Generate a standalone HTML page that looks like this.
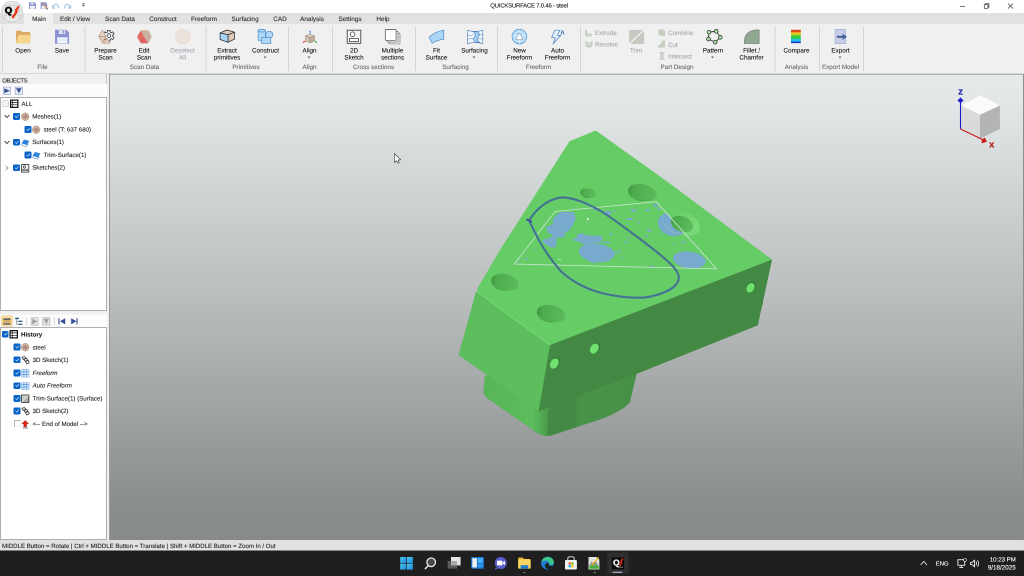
<!DOCTYPE html>
<html><head><meta charset="utf-8"><title>QUICKSURFACE 7.0.46 - steel</title>
<style>
*{margin:0;padding:0;box-sizing:border-box}
html,body{text-rendering:geometricPrecision;-webkit-text-stroke:0.1px currentColor;width:1024px;height:576px;overflow:hidden;background:#f0f0f0;font-family:"Liberation Sans",sans-serif;font-size:6.3px;color:#222}
.abs{position:absolute}
#title{position:absolute;left:0;top:0;width:1024px;height:13px;background:#fff}
#tabbar{position:absolute;left:0;top:13px;width:1024px;height:11px;background:#e1e1e1}
#tabmain{position:absolute;left:24px;top:13px;width:29px;height:11px;background:#f0f0f0}
.tab{position:absolute;top:15.21px;width:60px;margin-left:-30px;text-align:center;font-size:6.4px;line-height:8px;color:#2a2a2a;white-space:nowrap}
#ribbon{position:absolute;left:0;top:24px;width:1024px;height:50px;background:#f0f0f0;border-bottom:1px solid #d6d6d6}
.sep{position:absolute;top:26px;width:1px;height:45px;background:#d4d4d4}
.bl{position:absolute;top:47.10px;width:60px;margin-left:-30px;text-align:center;font-size:6.3px;line-height:7px;color:#151515;white-space:nowrap}
.bl.dis{color:#a6a8b2}
.gl{position:absolute;top:62.90px;width:80px;margin-left:-40px;text-align:center;font-size:6.3px;line-height:8px;color:#6a6a6a;white-space:nowrap}
.sm{position:absolute;font-size:6.3px;line-height:8px;color:#a6a8b2;white-space:nowrap}
.arr{position:absolute;width:0;height:0;border-left:1.9px solid transparent;border-right:1.9px solid transparent;border-top:2.1px solid #6a6a6a;margin-left:-1.9px}
.ic{position:absolute;overflow:visible}
#left1h{position:absolute;left:0;top:74px;width:107px;height:10px;background:#f0f0f0;border-right:1px solid #c8c8c8}
#left1t{position:absolute;left:0;top:84px;width:107px;height:13px;background:#fcfcfc}
#tree1{position:absolute;left:0;top:97px;width:107px;height:214px;background:#fff;border:1px solid #aeaeae}
#left2t{position:absolute;left:0;top:314.7px;width:107px;height:13px;background:#fcfcfc}
#tree2{position:absolute;left:0;top:327px;width:107px;height:213px;background:#fff;border:1px solid #aeaeae}
.ti{position:absolute;margin-top:1px;font-size:6.15px;line-height:8px;color:#222;white-space:nowrap}
.cb{position:absolute;width:6.8px;height:6.8px;margin:-.1px 0 0 -.1px;border-radius:1.2px;background:#0a64c8}
.cb:after{content:"";position:absolute;left:1.9px;top:1.9px;width:2.8px;height:1.3px;border-left:0.55px solid #fff;border-bottom:0.55px solid #fff;transform:rotate(-48deg)}
.cbe{position:absolute;width:6.6px;height:6.6px;border-radius:1.2px;background:#f4f4f4;border:0.8px solid #b8b8b8}
#vp{position:absolute;left:109px;top:74px;width:915px;height:466px;background:linear-gradient(#e7eaeb 0%,#e4e7e8 6%,#b8bbbb 50%,#8a8e8e 92%,#868a8a 100%);border-left:1px solid #9a9c9c;border-top:1px solid #b4b6b6;border-right:1px solid #8c8e8e}
#status{position:absolute;left:0;top:540px;width:1024px;height:11px;background:#e1e1e1}
#status span{position:absolute;left:2px;top:2.2px;font-size:6.1px;line-height:8px;color:#222;white-space:nowrap}
#taskbar{position:absolute;left:0;top:550.5px;width:1024px;height:25.5px;background:#1f1f1f}
.tb{position:absolute;color:#fff;font-size:6.6px;line-height:8px;white-space:nowrap}
</style></head><body><div id="root" style="position:absolute;left:0;top:0;width:2048px;height:1152px;will-change:transform;transform:scale(.5);transform-origin:0 0"><div style="position:absolute;left:0;top:0;width:1024px;height:576px;zoom:2">
<div id="title"></div>
<div id="tabbar"></div><div id="tabmain"></div>
<div id="ribbon"></div>
<div class="abs" style="left:480px;top:1.6px;width:98px;text-align:center;font-size:6px;letter-spacing:-0.23px;line-height:8px;color:#222;white-space:nowrap">QUICKSURFACE 7.0.46 - steel</div>
<svg class="ic" style="left:955.300px;top:.5px" width="69" height="13" viewBox="0 0 69 13"><path d="M4.5 5.8h5" stroke="#333" stroke-width=".7" fill="none"/><path d="M28.8 4.2h3.6v3.6h-3.6z M29.8 4.2v-1h3.6v3.6h-1" stroke="#333" stroke-width=".7" fill="none"/><path d="M52.5 3l5 5M57.500 3l-5 5" stroke="#333" stroke-width=".7" fill="none"/></svg>

<svg class="ic" style="left:0;top:0" width="100" height="26" viewBox="0 0 100 26">
<defs><clipPath id="lc"><circle cx="12" cy="11.600" r="10"/></clipPath></defs>
<circle cx="12" cy="11.600" r="10.400" fill="#ebebeb" stroke="#c4c4c4" stroke-width=".7"/>
<g clip-path="url(#lc)" stroke="#bcbcbc" stroke-width=".45" fill="none"><path d="M4 5.500h17M3 10.500h18M4 15.500h17M9.500 3v16M14.500 3v16M5 4v14M19 4v14"/></g>
<path d="M18.300 7.200L16 10.200L16.600 11.800L12.800 17.200" fill="none" stroke="#e63a1c" stroke-width="2.300" stroke-linecap="round" stroke-linejoin="round"/>
<text x="8.500" y="13.300" text-anchor="middle" font-family="Liberation Sans, sans-serif" font-weight="bold" font-size="9.400" fill="#0a0a0a" stroke="#0a0a0a" stroke-width=".7" stroke-linejoin="round">Q</text>
<!-- qat -->
<path d="M29 2.800q0-.5.500-.5h5l1.500 1.500v4.700q0 .5-.5.500h-6q-.5 0-.5-.5z" fill="#8e92d2"/><rect x="30" y="5.800" width="5" height="3" fill="#eef4fa"/><rect x="30.800" y="2.600" width="3" height="1.800" fill="#dfe4f0"/>
<path d="M40.600 2.800q0-.5.500-.5h4.600l1.500 1.500v4.700q0 .5-.5.500h-5.600q-.5 0-.5-.5z" fill="#8e92d2"/><rect x="41.600" y="5.800" width="4" height="3" fill="#eef4fa"/><path d="M42.600 3.200L47.300 8.900" stroke="#c89868" stroke-width="1.300"/><path d="M46.800 8.300l.9 1.300" stroke="#555" stroke-width=".8"/>
<path d="M53.200 7.400Q54.200 4.200 56.200 4.200Q58.600 4.600 58.600 8.400" fill="none" stroke="#a4c8e8" stroke-width="1.200"/><path d="M52 4.800v3.800h3.600z" fill="#a4c8e8"/>
<path d="M70 7.400Q69 4.200 67 4.200Q64.600 4.600 64.600 8.400" fill="none" stroke="#a4c8e8" stroke-width="1.200"/><path d="M71.200 4.800v3.800h-3.600z" fill="#a4c8e8"/>
<path d="M82 3.600h2.800" stroke="#555" stroke-width=".6"/><path d="M81.900 4.700h3l-1.500 2z" fill="#444"/>
</svg>
<div class="tab" style="left:39px">Main</div>
<div class="tab" style="left:75px">Edit / View</div>
<div class="tab" style="left:120px">Scan Data</div>
<div class="tab" style="left:163px">Construct</div>
<div class="tab" style="left:204px">Freeform</div>
<div class="tab" style="left:245px">Surfacing</div>
<div class="tab" style="left:280px">CAD</div>
<div class="tab" style="left:312px">Analysis</div>
<div class="tab" style="left:350px">Settings</div>
<div class="tab" style="left:383px">Help</div>

<div class="sep" style="left:2px"></div>
<div class="sep" style="left:84.5px"></div>
<div class="sep" style="left:205.5px"></div>
<div class="sep" style="left:288px"></div>
<div class="sep" style="left:332px"></div>
<div class="sep" style="left:415px"></div>
<div class="sep" style="left:497px"></div>
<div class="sep" style="left:580px"></div>
<div class="sep" style="left:774.5px"></div>
<div class="sep" style="left:819px"></div>
<div class="sep" style="left:863px"></div>
<div class="bl" style="left:23px">Open</div>
<div class="bl" style="left:62px">Save</div>
<div class="bl" style="left:105.5px">Prepare<br>Scan</div>
<div class="bl" style="left:144px">Edit<br>Scan</div>
<div class="bl dis" style="left:182.5px">Deselect<br>All</div>
<div class="bl" style="left:227px">Extract<br>primitives</div>
<div class="bl" style="left:265.5px">Construct</div>
<div class="arr" style="left:265.5px;top:56.4px"></div>
<div class="bl" style="left:309.5px">Align</div>
<div class="arr" style="left:309.5px;top:56.4px"></div>
<div class="bl" style="left:354px">2D<br>Sketch</div>
<div class="bl" style="left:392.5px">Multiple<br>sections</div>
<div class="bl" style="left:436.5px">Fit<br>Surface</div>
<div class="bl" style="left:474.5px">Surfacing</div>
<div class="arr" style="left:474.5px;top:56.4px"></div>
<div class="bl" style="left:519.5px">New<br>Freeform</div>
<div class="bl" style="left:557.5px">Auto<br>Freeform</div>
<div class="bl dis" style="left:636px">Trim</div>
<div class="bl" style="left:713px">Pattern</div>
<div class="arr" style="left:713px;top:56.4px"></div>
<div class="bl" style="left:751.5px">Fillet /<br>Chamfer</div>
<div class="bl" style="left:796.5px">Compare</div>
<div class="bl" style="left:840.5px">Export</div>
<div class="arr" style="left:840.5px;top:56.4px"></div>
<div class="gl" style="left:42.5px">File</div>
<div class="gl" style="left:144.5px">Scan Data</div>
<div class="gl" style="left:246px">Primitives</div>
<div class="gl" style="left:309.5px">Align</div>
<div class="gl" style="left:373.5px">Cross sections</div>
<div class="gl" style="left:455.5px">Surfacing</div>
<div class="gl" style="left:538.5px">Freeform</div>
<div class="gl" style="left:677px">Part Design</div>
<div class="gl" style="left:796.5px">Analysis</div>
<div class="gl" style="left:840.5px">Export Model</div>
<div class="sm" style="left:595px;top:29.00px">Extrude</div>
<div class="sm" style="left:595px;top:40.70px">Revolve</div>
<div class="sm" style="left:668px;top:29.00px">Combine</div>
<div class="sm" style="left:668px;top:40.80px">Cut</div>
<div class="sm" style="left:668px;top:52.30px">Intersect</div>
<svg class="ic" style="left:0;top:0" width="1024" height="576" viewBox="0 0 1024 576">
<!-- open -->
<path d="M16 31.400q0-.7.700-.7h4.300l1.200 1.300h7.300q.7 0 .7.700v9.900q0 .7-.7.700h-12.800q-.7 0-.7-.7z" fill="#dcaa62"/>
<path d="M18.200 35.600q.1-.7.800-.7h11.300q.8 0 .7.700l-1 7q-.1.700-.8.700h-12.500q-.7 0-.6-.7z" fill="#f4d68e"/>
<!-- save -->
<path d="M55 30.500q0-.7.700-.7h10.600l2.700 2.700v10.600q0 .7-.7.700h-12.600q-.7 0-.7-.7z" fill="#8e92d2"/>
<rect x="57.200" y="37.300" width="10.300" height="6" fill="#eef6fc"/><rect x="57.200" y="39.300" width="10.300" height="1.600" fill="#dcecf8"/>
<rect x="59" y="30.200" width="6.200" height="3.800" fill="#e4e8ec"/><rect x="62.600" y="30.700" width="1.500" height="2.800" fill="#8e92d2"/>
<!-- prepare scan -->
<path d="M107.43 30.37L110.17 30.37L110.08 32.02L111.35 32.75L112.73 31.85L114.10 34.22L112.63 34.97L112.63 36.43L114.10 37.18L112.73 39.55L111.35 38.65L110.08 39.38L110.17 41.03L107.43 41.03L107.52 39.38L106.25 38.65L104.87 39.55L103.50 37.18L104.97 36.43L104.97 34.97L103.50 34.22L104.87 31.85L106.25 32.75L107.52 32.02Z" fill="#f2f4f4" stroke="#3a3a3a" stroke-width=".8" stroke-linejoin="round"/><circle cx="108.900" cy="35.700" r="1.900" fill="#f0f0f0" stroke="#3a3a3a" stroke-width=".75"/>
<path d="M102.400 30.200L105.900 36.400L99.200 36.400Z" fill="#ead8ca" stroke="#b08870" stroke-width=".6" stroke-linejoin="round"/>
<path d="M99.200 36.400L105.900 36.400L102.400 43.200Z" fill="#e2cebe" stroke="#b08870" stroke-width=".6" stroke-linejoin="round"/>
<path d="M98.600 36.400L102.400 30.200M98.600 36.400L102.400 43.200" stroke="#c8a890" stroke-width=".5" fill="none"/>
<path d="M103.600 43.200L106.600 38.200L109.800 43.200Z" fill="#ead8ca" stroke="#b08870" stroke-width=".6" stroke-linejoin="round"/>
<!-- edit scan -->
<path d="M137.200 36.700L140.800 30.300L148.300 30.300L151.900 36.700L148.300 43.200L140.800 43.200Z" fill="#c8b09e"/>
<path d="M137.200 36.700L140.600 30.700L147.800 43.200L140.800 43.200Z" fill="#e06262"/>
<path d="M138.500 36.600h5.500" stroke="#e8c030" stroke-width=".6" stroke-dasharray="1.200 1"/>
<path d="M144.300 36.700L148.300 30.300M144.300 36.700H151.900" stroke="#d4bca8" stroke-width=".4"/>
<!-- deselect all -->
<circle cx="182.900" cy="36.600" r="7.200" fill="#ebe4dd" stroke="#dcc8b4" stroke-width=".7" stroke-dasharray="1.600 1.200"/>
<!-- extract primitives -->
<path d="M220.100 32.900L226.800 30L234.600 32.200L228 34.800Z" fill="#dccabc" stroke="#222" stroke-width=".7" stroke-linejoin="round"/>
<path d="M228 34.800L234.600 32.200L234.600 39.100L228 42.300Z" fill="#dccabc" stroke="#222" stroke-width=".7" stroke-linejoin="round"/>
<path d="M220.100 32.900L228 34.800L228 42.300L220.100 39.500Z" fill="#a8d6fa" stroke="#222" stroke-width=".7" stroke-linejoin="round"/>
<!-- construct -->
<circle cx="269.300" cy="34.800" r="3.600" fill="#b0d8f8" stroke="#3c80c0" stroke-width=".6"/>
<path d="M258.100 30.600v9q0 1.300 3.700 1.300t3.700-1.300v-9z" fill="#b0d8f8" stroke="#3c80c0" stroke-width=".6"/>
<ellipse cx="261.800" cy="30.600" rx="3.700" ry="1.400" fill="#b0d8f8" stroke="#3c80c0" stroke-width=".6"/>
<rect x="261.600" y="37.400" width="9.200" height="6.100" fill="#b0d8f8" stroke="#3c80c0" stroke-width=".6"/>
<!-- align -->
<path d="M305.400 35.800L310 34L314.600 35.800L310 37.600Z" fill="#e0d0c2" stroke="#8a7868" stroke-width=".4"/>
<path d="M305.400 35.800L310 37.600V43L305.400 41Z" fill="#d4c0b0" stroke="#8a7868" stroke-width=".4"/>
<path d="M310 37.600L314.600 35.800V41L310 43Z" fill="#c4b0a0" stroke="#8a7868" stroke-width=".4"/>
<path d="M310 34V31" stroke="#4a8ae0" stroke-width=".9"/><path d="M309 31.800L310 30.200L311 31.800Z" fill="#4a8ae0"/>
<path d="M305.400 41L303.600 42.200" stroke="#e03a2a" stroke-width=".9"/><circle cx="303.500" cy="42.200" r=".7" fill="#e03a2a"/>
<path d="M314.600 41L316.300 42.200" stroke="#3ab83a" stroke-width=".9"/><circle cx="316.400" cy="42.200" r=".7" fill="#3ab83a"/>
<!-- 2d sketch -->
<rect x="347.200" y="30.200" width="13.600" height="13.100" fill="#f6f6f6" stroke="#333" stroke-width=".8"/>
<circle cx="352.600" cy="34.200" r="2.300" fill="#fff" stroke="#333" stroke-width=".7"/>
<rect x="349.400" y="38.600" width="9.200" height="3" fill="#fff" stroke="#333" stroke-width=".7"/>
<!-- multiple sections -->
<rect x="389.200" y="33.200" width="10.800" height="10.800" rx=".8" fill="#eef0ee" stroke="#6a6a6a" stroke-width=".6"/>
<rect x="387.200" y="31.300" width="10.800" height="10.800" rx=".8" fill="#f6f7f6" stroke="#5a5a5a" stroke-width=".6"/>
<rect x="385.300" y="29.500" width="10.800" height="10.800" rx=".8" fill="#fff" stroke="#4a4a4a" stroke-width=".7"/>
<!-- fit surface -->
<path d="M429 37.400Q435 31.500 443.800 30.200L443.800 39.300Q437 40 432.200 43.300Z" fill="#acd6f8" stroke="#3c80c0" stroke-width=".6" stroke-linejoin="round"/>
<!-- surfacing -->
<path d="M467.400 30.400Q475 32.500 482.800 30.400L482.800 43.600Q475 41.600 467.400 43.600Z" fill="#f0f5fa" stroke="#4a7cb4" stroke-width=".6"/>
<path d="M472.600 31.500Q477.500 34 474.500 37Q472 40 475.800 42.200L479.800 42.400Q476 40 478.400 37Q481 33.800 477 31.600Z" fill="#a4d0f6" stroke="#4a7cb4" stroke-width=".6"/>
<path d="M467.400 35Q470 36 474.500 34.500M467.400 39.500Q470 38 473.500 39M478.500 34.500Q481 35.500 482.800 34.500M477.800 39Q480 38 482.800 39.500" fill="none" stroke="#5a8cc0" stroke-width=".5"/>
<!-- new freeform -->
<circle cx="519.400" cy="36.600" r="7.300" fill="#bcdef8" stroke="#3c8ad0" stroke-width=".7"/>
<path d="M519.400 32.800L523.200 39.600H515.600Z" fill="#fff" stroke="#8a9aaa" stroke-width=".6" stroke-linejoin="round"/>
<path d="M519.400 32.800V29.400M523.200 39.600L526 41.600M515.600 39.600L512.800 41.600M521.300 36.200L526.600 35.400M517.500 36.200L512.200 35.400M519.400 39.600V43.800" stroke="#f0f8ff" stroke-width=".5"/>
<!-- auto freeform -->
<path d="M554.800 30.200H560L557.300 35.400H560.800L553 44L555.400 37.800H551.600Z" fill="#e4f0fa" stroke="#4a82ba" stroke-width=".7" stroke-linejoin="round"/>
<!-- trim -->
<rect x="629.100" y="29.900" width="15" height="14.100" fill="#c4c8c0"/>
<path d="M629.100 44L644.100 29.900" stroke="#f6f6f6" stroke-width="1.200"/>
<!-- extrude / revolve small -->
<path d="M585.200 29.800l1.800.5v2.600l4.800.8.400 2.600-4.600.6-2.400-1.400z" fill="#c2cac0"/><path d="M587 33l4.600.8-.2 1.800-4.400-.2z" fill="#d2dcd0"/><path d="M586.600 36.200l4.400-.4" stroke="#b8e0b8" stroke-width=".5"/>
<path d="M585.600 40.600l1.400 1.400 2 .5 2.200-.5 1.200-1.400.1 4.600-1.300 2h-4.400l-1.300-2z" fill="#c2cac0"/><path d="M587 42l2 .6 2.200-.6-.3 3.600h-3.600z" fill="#d2dcd0"/>
<!-- combine / cut / intersect -->
<path d="M659.600 29.400q2.800-.8 4.600.6l1.300 2.400-.4 3-5 .4-1.800-1.600-.3-3z" fill="#c6cec2"/><path d="M660.800 35.600h3.600" stroke="#a8e0a8" stroke-width=".5"/>
<path d="M658.200 47.600v-2.600l2.400-.6 1.400-3.600 3-.4v7.200z" fill="#c6cec2"/>
<path d="M659 52h6l-1.600 1.800v4l1.800 1.800h-6.600l1.800-1.800v-4z" fill="#c6cec2"/>
<!-- pattern -->
<path d="M709 32.200L716.200 31.200L720.400 37.300L715.200 42.200L708.400 39Z" fill="none" stroke="#222" stroke-width=".8" stroke-linejoin="round"/>
<g fill="#a8e4a8" stroke="#222" stroke-width=".7"><circle cx="709" cy="32.200" r="1.900"/><circle cx="716.200" cy="31.300" r="1.900"/><circle cx="720.300" cy="37.300" r="1.900"/><circle cx="715.200" cy="42.100" r="1.900"/><circle cx="708.500" cy="39" r="1.900"/></g>
<!-- fillet -->
<path d="M759.200 29.900V43.500H744.300V41Q745 31 756.500 29.900Z" fill="#8fa88f" stroke="#808080" stroke-width=".7" stroke-linejoin="round"/>
<!-- compare -->
<defs><linearGradient id="cmp" x1="0" y1="0" x2="0" y2="1"><stop offset="0" stop-color="#d83a1a"/><stop offset=".14" stop-color="#e04a1a"/><stop offset=".22" stop-color="#e8c020"/><stop offset=".36" stop-color="#d8cc20"/><stop offset=".44" stop-color="#3ccc3c"/><stop offset=".64" stop-color="#30c840"/><stop offset=".72" stop-color="#28c8e8"/><stop offset=".86" stop-color="#20b0f0"/><stop offset=".93" stop-color="#1040c8"/><stop offset="1" stop-color="#0c2cb0"/></linearGradient></defs>
<rect x="791" y="29.800" width="9.800" height="13.300" fill="url(#cmp)"/>
<!-- export -->
<rect x="835" y="29.400" width="10.800" height="14.300" fill="#c8cce6" stroke="#a4a8d4" stroke-width=".6"/>
<path d="M837 35.700H842.600V33.600L846.900 36.800L842.600 40V37.900H837Z" fill="#44629e"/>
<text x="562.500" y="34.300" text-anchor="middle" font-family="Liberation Sans, sans-serif" font-weight="bold" font-size="6.200" fill="#3c74b4">A</text>
</svg>


<div id="left1h"></div><div id="left1t"></div><div id="tree1"></div><div id="left2t"></div><div id="tree2"></div>
<div class="ti" style="left:2.2px;font-size:5.9px;letter-spacing:-0.3px;top:75.26px">OBJECTS</div>
<div class="cbe" style="left:2.5px;top:100.4px"></div>
<svg class="ic" style="left:10.1px;top:99.7px" width="8.500" height="8.500" viewBox="0 0 8.500 8.500"><rect x=".6" y=".6" width="7.300" height="7.300" fill="#fff" stroke="#111" stroke-width="1.200"/><path d="M.5 2.900h7.500M.5 5.300h7.500M2.700 .5v7.400" stroke="#111" stroke-width=".7"/></svg>
<div class="ti" style="left:21.5px;top:98.75px">ALL</div>
<svg class="ic" style="left:4px;top:114.6px" width="6" height="4" viewBox="0 0 6 4"><path d="M.6 .6L3 3L5.400 .6" stroke="#3a3a3a" stroke-width=".95" fill="none"/></svg>
<div class="cb" style="left:13.2px;top:113.3px"></div>
<svg class="ic" style="left:20.8px;top:112.6px" width="8.500" height="8.500" viewBox="0 0 8.500 8.500"><circle cx="4.200" cy="4.200" r="3.800" fill="#dcc6b2" stroke="#a07c62" stroke-width=".5"/><path d="M.6 4.200h7.200M4.200 .6v7.200M1.700 1.700l5 5M6.700 1.700l-5 5" stroke="#9a7460" stroke-width=".5"/><circle cx="4.200" cy="4.200" r="2" fill="none" stroke="#9a7460" stroke-width=".5"/><circle cx="4.200" cy="4.200" r=".7" fill="#9a7a9a"/></svg>
<div class="ti" style="left:32.2px;top:111.50px">Meshes(1)</div>
<div class="cb" style="left:24.6px;top:126.2px"></div>
<svg class="ic" style="left:32.2px;top:125.5px" width="8.500" height="8.500" viewBox="0 0 8.500 8.500"><circle cx="4.200" cy="4.200" r="3.800" fill="#dcc6b2" stroke="#a07c62" stroke-width=".5"/><path d="M.6 4.200h7.200M4.200 .6v7.200M1.700 1.700l5 5M6.700 1.700l-5 5" stroke="#9a7460" stroke-width=".5"/><circle cx="4.200" cy="4.200" r="2" fill="none" stroke="#9a7460" stroke-width=".5"/><circle cx="4.200" cy="4.200" r=".7" fill="#9a7a9a"/></svg>
<div class="ti" style="left:43.6px;top:124.25px">steel (T: 637 680)</div>
<svg class="ic" style="left:4px;top:140.3px" width="6" height="4" viewBox="0 0 6 4"><path d="M.6 .6L3 3L5.400 .6" stroke="#3a3a3a" stroke-width=".95" fill="none"/></svg>
<div class="cb" style="left:13.2px;top:139.0px"></div>
<svg class="ic" style="left:20.8px;top:138.3px" width="8.500" height="8.500" viewBox="0 0 8.500 8.500"><path d="M.3 6.400L2 4.600L7 6L5.600 8.200Z" fill="#fff" stroke="#2a6ab8" stroke-width=".5"/><path d="M.6 4.800L3 1L8.300 2.400L6 6.600Z" fill="#2e84dc"/></svg>
<div class="ti" style="left:32.2px;top:137.01px">Surfaces(1)</div>
<div class="cb" style="left:24.6px;top:151.7px"></div>
<svg class="ic" style="left:32.2px;top:151.0px" width="8.500" height="8.500" viewBox="0 0 8.500 8.500"><path d="M.3 6.400L2 4.600L7 6L5.600 8.200Z" fill="#fff" stroke="#2a6ab8" stroke-width=".5"/><path d="M.6 4.800L3 1L8.300 2.400L6 6.600Z" fill="#2e84dc"/></svg>
<div class="ti" style="left:43.6px;top:149.75px">Trim-Surface(1)</div>
<svg class="ic" style="left:5px;top:164.8px" width="4" height="6" viewBox="0 0 4 6"><path d="M.6 .6L3 3L.6 5.400" stroke="#888" stroke-width=".8" fill="none"/></svg>
<div class="cb" style="left:13.2px;top:164.5px"></div>
<svg class="ic" style="left:20.8px;top:163.8px" width="8.500" height="8.500" viewBox="0 0 8.500 8.500"><rect x=".5" y=".5" width="7.300" height="7.600" fill="#f4f4f4" stroke="#333" stroke-width=".8"/><circle cx="3.400" cy="2.900" r="1.200" fill="none" stroke="#333" stroke-width=".6"/><rect x="1.800" y="5.200" width="4.600" height="1.500" fill="none" stroke="#333" stroke-width=".6"/></svg>
<div class="ti" style="left:32.2px;top:162.51px">Sketches(2)</div>
<div class="cb" style="left:2px;top:330.9px"></div>
<svg class="ic" style="left:9.6px;top:330.2px" width="8.500" height="8.500" viewBox="0 0 8.500 8.500"><rect x=".6" y=".6" width="7.300" height="7.300" fill="#fff" stroke="#111" stroke-width="1.200"/><path d="M.5 2.900h7.500M.5 5.300h7.500M2.700 .5v7.400" stroke="#111" stroke-width=".7"/></svg>
<div class="ti" style="left:21px;top:329.60px;font-weight:bold">History</div>
<div class="cb" style="left:13.6px;top:343.59999999999997px"></div>
<svg class="ic" style="left:21.2px;top:342.9px" width="8.500" height="8.500" viewBox="0 0 8.500 8.500"><circle cx="4.200" cy="4.200" r="3.800" fill="#dcc6b2" stroke="#a07c62" stroke-width=".5"/><path d="M.6 4.200h7.200M4.200 .6v7.200M1.700 1.700l5 5M6.700 1.700l-5 5" stroke="#9a7460" stroke-width=".5"/><circle cx="4.200" cy="4.200" r="2" fill="none" stroke="#9a7460" stroke-width=".5"/><circle cx="4.200" cy="4.200" r=".7" fill="#9a7a9a"/></svg>
<div class="ti" style="left:32.6px;top:342.35px;">steel</div>
<div class="cb" style="left:13.6px;top:356.5px"></div>
<svg class="ic" style="left:21.2px;top:355.8px" width="8.500" height="8.500" viewBox="0 0 8.500 8.500"><path d="M.8 1.200L3.600 .6L5.400 2.600L2.400 3.600Z M2.600 3L5.600 2.400L7.400 4.600L4.400 5.600Z M4.200 5L7.200 4.400L8.200 6.800L5.600 8Z" fill="#f4f4f4" stroke="#333" stroke-width=".7" stroke-linejoin="round"/></svg>
<div class="ti" style="left:32.6px;top:355.11px;">3D Sketch(1)</div>
<div class="cb" style="left:13.6px;top:369.59999999999997px"></div>
<svg class="ic" style="left:21.2px;top:368.9px" width="8.500" height="8.500" viewBox="0 0 8.500 8.500"><rect x=".4" y=".4" width="7.700" height="7.700" fill="#dcebfa" stroke="#8ab4e4" stroke-width=".5"/><path d="M.4 2.900h7.700M.4 5.500h7.700M2.900 .4v7.700M5.500 .4v7.700" stroke="#5a96dc" stroke-width=".7"/></svg>
<div class="ti" style="left:32.6px;top:367.85px;"><i>Freeform</i></div>
<div class="cb" style="left:13.6px;top:382.4px"></div>
<svg class="ic" style="left:21.2px;top:381.7px" width="8.500" height="8.500" viewBox="0 0 8.500 8.500"><rect x=".4" y=".4" width="7.700" height="7.700" fill="#dcebfa" stroke="#8ab4e4" stroke-width=".5"/><path d="M.4 2.900h7.700M.4 5.500h7.700M2.900 .4v7.700M5.500 .4v7.700" stroke="#5a96dc" stroke-width=".7"/></svg>
<div class="ti" style="left:32.6px;top:380.60px;"><i>Auto Freeform</i></div>
<div class="cb" style="left:13.6px;top:395.09999999999997px"></div>
<svg class="ic" style="left:21.2px;top:394.4px" width="8.500" height="8.500" viewBox="0 0 8.500 8.500"><rect x=".5" y=".5" width="7.400" height="7.400" fill="#a8b0a4" stroke="#222" stroke-width=".8"/><path d="M.8 7.600L7.600 .8" stroke="#f0f0f0" stroke-width=".7"/><path d="M.9 .9H7L.9 7Z" fill="#c8d0c4"/></svg>
<div class="ti" style="left:32.6px;top:393.35px;">Trim-Surface(1) (Surface)</div>
<div class="cb" style="left:13.6px;top:407.8px"></div>
<svg class="ic" style="left:21.2px;top:407.1px" width="8.500" height="8.500" viewBox="0 0 8.500 8.500"><path d="M.8 1.200L3.600 .6L5.400 2.600L2.400 3.600Z M2.600 3L5.600 2.400L7.400 4.600L4.400 5.600Z M4.200 5L7.200 4.400L8.200 6.800L5.600 8Z" fill="#f4f4f4" stroke="#333" stroke-width=".7" stroke-linejoin="round"/></svg>
<div class="ti" style="left:32.6px;top:406.10px;">3D Sketch(2)</div>
<div class="cbe" style="left:13.8px;top:420.4px;border-radius:0;background:#fff;border-color:#6a6a6a #e0e0e0 #e0e0e0 #6a6a6a"></div>
<svg class="ic" style="left:21.2px;top:419.9px" width="8.500" height="8.500" viewBox="0 0 8.500 8.500"><path d="M4.200 .4L7.600 3.800H5.600V6.800H2.800V3.800H.8Z" fill="#e0241c" stroke="#9a1410" stroke-width=".4"/><path d="M1.600 8h5.200" stroke="#555" stroke-width=".8"/></svg>
<div class="ti" style="left:32.6px;top:418.85px;">&lt;-- End of Model --&gt;</div>
<svg class="ic" style="left:0;top:0" width="110" height="330" viewBox="0 0 110 330">
<rect x="3.300" y="87.100" width="7.300" height="7.300" fill="#e6eef8" stroke="#8a9cc0" stroke-width=".6"/><path d="M4.300 88.200L9.800 90.700L4.300 93.200Z" fill="#3a4f94"/>
<rect x="15.200" y="87.100" width="7.300" height="7.300" fill="#e6eef8" stroke="#8a9cc0" stroke-width=".6"/><path d="M16 88.300H21.700L18.850 93.400Z" fill="#3a4f94"/>
<g transform="translate(0 .4)"><rect x="1.600" y="315.400" width="10.600" height="10.400" rx="1" fill="#fbe6c4" stroke="#f2c078" stroke-width=".7"/>
<rect x="3" y="317.600" width="7.800" height="6.800" fill="#d8b070" stroke="#f0c23c" stroke-width=".7"/>
<path d="M3.400 318.800h7M3.400 323.600h7" stroke="#4c5c84" stroke-width="1.300"/>
<path d="M15.200 318h3.800" stroke="#2c5068" stroke-width="1.300"/><path d="M18.600 320.900h3.800M18.600 323.900h3.800" stroke="#3c6080" stroke-width="1.300"/><path d="M16.600 318.600v5.300h2M16.600 320.900h2" fill="none" stroke="#3c6080" stroke-width=".5"/>
<path d="M26.400 317v8M54.300 317v8" stroke="#c8ccd0" stroke-width=".7"/>
<rect x="31" y="317.200" width="7.200" height="7.600" fill="#e2e2e2" stroke="#b4b4b4" stroke-width=".6"/><path d="M32.200 318.200L37.400 321L32.200 323.800Z" fill="#a2a2a2"/>
<rect x="42.600" y="317.200" width="7.400" height="7.600" fill="#e2e2e2" stroke="#b4b4b4" stroke-width=".6"/><path d="M43.600 318.400H49L46.300 323.800Z" fill="#a2a2a2"/>
<path d="M59 317.800v6.200" stroke="#3a4f94" stroke-width="1.100"/><path d="M65.200 317.800V324L60 320.900Z" fill="#3a4f94"/>
<path d="M77 317.800v6.200" stroke="#3a4f94" stroke-width="1.100"/><path d="M71.200 317.800V324L76.400 320.900Z" fill="#3a4f94"/></g>
</svg>


<div id="vp"></div>
<svg class="ic" style="left:0;top:0" width="1024" height="576" viewBox="0 0 1024 576">
<defs>
<linearGradient id="hg" x1="0" y1="0" x2="1" y2="0"><stop offset="0" stop-color="#3f953f"/><stop offset=".18" stop-color="#4eac4e"/><stop offset=".7" stop-color="#57b657"/><stop offset="1" stop-color="#5cbc5c"/></linearGradient>
<linearGradient id="bossL" x1="0" y1="0" x2="1" y2="0"><stop offset="0" stop-color="#58b658"/><stop offset=".75" stop-color="#5cbe5c"/><stop offset="1" stop-color="#4a984a"/></linearGradient>
<linearGradient id="bossR" x1="0" y1="0" x2="1" y2="0"><stop offset="0" stop-color="#448a44"/><stop offset=".6" stop-color="#448a44"/><stop offset=".64" stop-color="#4a944a"/><stop offset="1" stop-color="#479047"/></linearGradient>
<linearGradient id="hg3" x1="0" y1="0" x2="1" y2="0"><stop offset="0" stop-color="#4aa64a"/><stop offset="1" stop-color="#5cc05c"/></linearGradient><linearGradient id="ring3" x1="0" y1="0" x2="1" y2="0"><stop offset="0" stop-color="#66cc66"/><stop offset=".5" stop-color="#6ed46e"/><stop offset="1" stop-color="#7cdc7c"/></linearGradient></defs>
<!-- boss -->
<path d="M485 376L483.500 392Q484 396 490 400L536 432Q545 438 553 435L603 418.500Q624 410 630 402L636.500 374L560 380Z" fill="url(#bossR)"/>
<path d="M485 376L483.500 392Q484 396 490 400L536 432Q542 436 547 436.200L549 405L500 372Z" fill="url(#bossL)"/>
<path d="M476.200 291.200L550 345L772 259.500L757.800 325.200L637.500 373.500L538.700 411.200L458.700 355Z" fill="#52a852"/>
<!-- left face -->
<path d="M476.200 291.200L550 345L538.700 411.200L458.700 355Z" fill="#5cbe5c"/>
<!-- dark face -->
<path d="M550 345L772 259.500L757.800 325.200L637.500 373.500L538.700 411.200Z" fill="#438943"/>
<!-- top face -->
<path d="M595.750 130.500L569.500 141.200L500 250L478.500 286.500Q476 291 479 293.200L550 345L772 259.500L665 180Z" fill="#66cc66"/>
<path d="M477.500 292.200L550 345" stroke="#7ade7a" stroke-width=".8" fill="none"/>
<!-- holes -->
<g>
<ellipse cx="588.200" cy="193" rx="7.800" ry="4.600" fill="url(#hg)" transform="rotate(13 588.200 193)"/>
<ellipse cx="642.500" cy="192.500" rx="14.500" ry="8.200" fill="url(#hg)" transform="rotate(13 642.500 192.500)"/>
<ellipse cx="505" cy="282.300" rx="13.800" ry="8.200" fill="url(#hg)" transform="rotate(13 505 282.300)"/>
<ellipse cx="551.300" cy="313.700" rx="14.500" ry="8.400" fill="url(#hg)" transform="rotate(13 551.300 313.700)"/>
<ellipse cx="683.300" cy="223.900" rx="17.200" ry="11.600" fill="url(#ring3)" transform="rotate(20 683.300 223.900)"/>

<ellipse cx="751.200" cy="287.200" rx="4.3" ry="5.8999999999999995" fill="#357a35" transform="rotate(32 751.200 287.200)"/><ellipse cx="750.5" cy="287.8" rx="3.7" ry="5.1" fill="#6ee06e" transform="rotate(32 750.5 287.8)"/>
<ellipse cx="595" cy="348" rx="4.6" ry="6.3" fill="#357a35" transform="rotate(32 595 348)"/><ellipse cx="594.3" cy="348.6" rx="4.0" ry="5.5" fill="#6ee06e" transform="rotate(32 594.3 348.6)"/>
<ellipse cx="555" cy="363" rx="4.6" ry="6.3" fill="#357a35" transform="rotate(32 555 363)"/><ellipse cx="554.3" cy="363.6" rx="4.0" ry="5.5" fill="#6ee06e" transform="rotate(32 554.3 363.6)"/>
</g>
<g fill="none" stroke="#3f963f" stroke-width=".6">
<path d="M580.600 192.400Q582 197.800 589 197.600" /><path d="M628.300 191Q630 200.500 644 200.700"/><path d="M491.400 281Q493 290 506 290.500"/><path d="M537 312.400Q539 321.600 552.500 322"/></g>
<defs><clipPath id="quad"><path d="M555.100 211.500L656.300 201.700L716.700 268.900L514.300 264Z"/></clipPath></defs>
<g fill="#78aacd" clip-path="url(#quad)">
<path d="M560.0 212.0 L574.1 212.0 L575.8 218.3 L573.0 224.6 L569.9 230.2 L565.0 232.6 L564.3 237.3 L556.5 237.7 L556.5 246.4 L551.9 248.1 L544.8 243.9 L541.8 239.7 L549.9 238.0 L553.0 235.2 L547.7 232.6 L546.0 227.0 L552.7 224.2 L553.3 218.3Z"/>
<path d="M571.3 239.7 L576.9 237.7 L577.2 234.6 L581.1 233.0 L586.8 235.4 L599.4 235.7 L602.5 236.8 L601.1 242.2 L592.4 242.9 L583.9 244.4 L578.3 241.6Z"/>
<ellipse cx="596.600" cy="252.800" rx="18" ry="9.300" transform="rotate(7 596.600 252.800)"/>
<path d="M588 260l3 2.600 6 .4 1-2z"/>
<ellipse cx="689.300" cy="259.900" rx="16.500" ry="8.400" transform="rotate(8 689.300 259.900)"/>
<ellipse cx="672" cy="224.500" rx="14.500" ry="11.300" transform="rotate(20 672 224.500)"/>
<ellipse cx="608.5" cy="212.7" rx="3.1" ry="1.7"/><ellipse cx="595.2" cy="209.1" rx="1.9" ry="1.0"/><ellipse cx="605.0" cy="242.2" rx="2.9" ry="0.8"/><ellipse cx="633.2" cy="210.5" rx="2.2" ry="1.2"/><ellipse cx="628.9" cy="219.0" rx="2.5" ry="1.0"/><ellipse cx="648.6" cy="230.2" rx="1.9" ry="1.0"/><ellipse cx="615.6" cy="252.7" rx="1.7" ry="0.7"/><ellipse cx="624.7" cy="242.2" rx="1.2" ry="0.7"/><ellipse cx="526.3" cy="248.5" rx="1.0" ry="0.7"/><ellipse cx="527.0" cy="259.1" rx="1.7" ry="0.7"/><ellipse cx="517.8" cy="261.9" rx="1.2" ry="0.7"/><ellipse cx="534.0" cy="249.2" rx="1.0" ry="0.5"/><ellipse cx="575.5" cy="232.3" rx="1.0" ry="0.5"/><ellipse cx="588.2" cy="233.8" rx="0.7" ry="0.5"/><ellipse cx="611.4" cy="233.8" rx="1.4" ry="0.7"/><ellipse cx="638.8" cy="222.5" rx="1.2" ry="0.7"/><ellipse cx="645.8" cy="235.9" rx="1.4" ry="0.7"/><ellipse cx="628.2" cy="238.0" rx="1.2" ry="0.5"/><ellipse cx="619.8" cy="250.6" rx="1.0" ry="0.7"/><ellipse cx="607.0" cy="212.4" rx="2.4" ry="1.4"/><ellipse cx="634.5" cy="210.5" rx="2.2" ry="1.2"/><ellipse cx="631.6" cy="219.0" rx="1.9" ry="1.0"/><ellipse cx="647.8" cy="210.1" rx="2.5" ry="1.0"/><ellipse cx="655.5" cy="205.6" rx="2.5" ry="1.4"/><ellipse cx="659.1" cy="209.1" rx="1.7" ry="1.0"/><ellipse cx="649.9" cy="230.7" rx="1.9" ry="1.0"/><ellipse cx="647.1" cy="235.9" rx="1.4" ry="0.7"/><ellipse cx="628.8" cy="237.7" rx="1.4" ry="0.7"/><ellipse cx="626.7" cy="241.9" rx="1.2" ry="0.7"/><ellipse cx="610.5" cy="234.5" rx="1.4" ry="0.7"/><ellipse cx="608.4" cy="242.9" rx="2.4" ry="0.8"/><ellipse cx="618.3" cy="252.3" rx="1.4" ry="0.7"/><ellipse cx="683.7" cy="242.2" rx="2.4" ry="0.7"/><ellipse cx="674.3" cy="244.3" rx="1.0" ry="0.7"/><ellipse cx="661.9" cy="233.8" rx="1.4" ry="0.7"/><ellipse cx="652.0" cy="266.4" rx="2.2" ry="0.7"/><ellipse cx="638.0" cy="222.5" rx="1.2" ry="0.7"/><ellipse cx="626.7" cy="224.6" rx="1.2" ry="0.5"/><ellipse cx="622.5" cy="257.7" rx="1.0" ry="0.7"/><ellipse cx="681.6" cy="247.8" rx="0.7" ry="0.5"/><ellipse cx="614.8" cy="211.3" rx="1.2" ry="0.7"/>
</g>
<ellipse cx="681.900" cy="224" rx="11.600" ry="7.600" fill="url(#hg3)" transform="rotate(22 681.900 224)"/>
<path d="M663.500 222.500Q666 232 681 233.500" fill="none" stroke="#8ec4c0" stroke-width=".6"/>
<path d="M555.100 211.500L656.300 201.700L716.700 268.900L514.300 264Z" fill="none" stroke="#cfe8d8" stroke-width=".75"/>
<circle cx="587.750" cy="219" r="1.100" fill="#e0f4dc"/><path d="M558 259.200l2 .4 1 1" stroke="#e0f4dc" stroke-width=".6" fill="none"/>
<path d="M529.100 220.400C535 211 546 199 562 197.400C576 198 588 204 600 210.500C612 218 624 227 636 236C648 245 660 254 668 261.500C675 268 680 274 678.500 280C676 288 664 294.500 645 297.500C630 298.500 612 296 598 292C584 288 570 280 560.700 271C551 260 543 248 537.500 237.500C534 230 531 225 529.100 220.400Z" fill="none" stroke="#4b7c98" stroke-width="2.200" stroke-linejoin="round"/>
<path d="M529.100 220.400C535 211 546 199 562 197.400C576 198 588 204 600 210.500C612 218 624 227 636 236C648 245 660 254 668 261.500C675 268 680 274 678.500 280C676 288 664 294.500 645 297.500C630 298.500 612 296 598 292C584 288 570 280 560.700 271C551 260 543 248 537.500 237.500C534 230 531 225 529.100 220.400Z" fill="none" stroke="#3a6484" stroke-width="1.200" stroke-dasharray="1.100 1.300" stroke-linejoin="round"/>
<path d="M527.300 219.800l3.600 1.600" stroke="#44509c" stroke-width="2.200" stroke-linecap="round"/>


</svg>

<svg class="ic" style="left:0;top:0" width="1024" height="576" viewBox="0 0 1024 576">
<path d="M979.900 95.200L999.900 105.600L979.900 114.800L961.300 105.600Z" fill="#fbfbfb"/>
<path d="M961.300 105.600L979.900 114.800L979.900 138.600L961.300 129Z" fill="#dadada"/>
<path d="M979.900 114.800L999.900 105.600L999.900 129L979.900 138.600Z" fill="#b3b5b4"/>
<path d="M960.500 102V129" stroke="#1a1ac8" stroke-width="1.100"/>
<path d="M960.500 129L984 140.200" stroke="#c81a1a" stroke-width="1.100"/>
<path d="M960.500 97.400L963.600 100.600L960.500 103L957.400 100.600Z" fill="#1a1ac8"/>
<path d="M984.800 137.500L986.800 141.800L981.600 143.400L981.800 139.600Z" fill="#c81a1a"/>
<text x="960.600" y="94.600" text-anchor="middle" font-family="Liberation Sans, sans-serif" font-weight="bold" font-size="7.200" fill="#1a1ab4" stroke="#1a1ab4" stroke-width=".35">Z</text>
<text x="991.600" y="147.300" text-anchor="middle" font-family="Liberation Sans, sans-serif" font-weight="bold" font-size="7.200" fill="#b41a1a" stroke="#b41a1a" stroke-width=".35">X</text>
<path d="M394.400 153.600V162.600L396.500 160.700L397.900 163.400L399.300 162.700L398 160.100L400.800 159.800Z" fill="#fff" stroke="#333" stroke-width=".6" stroke-linejoin="round"/>
</svg>
<div id="status"><span>MIDDLE Button = Rotate | Ctrl + MIDDLE Button = Translate | Shift + MIDDLE Button = Zoom In / Out</span></div>
<div id="taskbar"></div>
<svg class="ic" style="left:0;top:0" width="1024" height="576" viewBox="0 0 1024 576">
<defs><linearGradient id="win" x1="0" y1="0" x2="1" y2="1"><stop offset="0" stop-color="#4cc8f4"/><stop offset="1" stop-color="#1c8ad8"/></linearGradient>
<linearGradient id="edge" x1="0" y1="0" x2="1" y2="1"><stop offset="0" stop-color="#2a8ad8"/><stop offset=".6" stop-color="#1a74c8"/><stop offset="1" stop-color="#1460b0"/></linearGradient></defs>
<g fill="url(#win)"><rect x="400.200" y="557" width="6" height="6"/><rect x="406.900" y="557" width="6" height="6"/><rect x="400.200" y="563.600" width="6" height="6"/><rect x="406.900" y="563.600" width="6" height="6"/></g>
<circle cx="431.200" cy="562.300" r="4.300" fill="#4a4a4a" stroke="#e8e8e8" stroke-width="1.300"/><path d="M428.200 565.600L425.300 568.700" stroke="#e8e8e8" stroke-width="1.500" stroke-linecap="round"/>
<rect x="447.600" y="561" width="9.500" height="7.600" fill="#5a5a5a"/><rect x="451" y="557" width="9.600" height="8.400" fill="#e4e4e4"/><rect x="451" y="561" width="6.100" height="4.400" fill="#a8a8a8"/>
<rect x="471.100" y="557" width="12.800" height="11.700" rx="1" fill="#1a78d4"/><rect x="472.300" y="558.200" width="4.600" height="9.300" fill="#f0f0f0"/><rect x="478" y="558.200" width="4.800" height="4.600" fill="#48b4f4"/><rect x="478" y="563.600" width="4.800" height="3.900" fill="#2a94e4"/>
<circle cx="500.800" cy="563" r="6" fill="#5a5ed0"/><path d="M495.500 567.500l-.5 2.200 3-1z" fill="#5a5ed0"/><rect x="497" y="560.600" width="5.400" height="4.800" rx=".8" fill="#fff"/><path d="M502.800 562.400l2.200-1.400v4l-2.200-1.400z" fill="#fff"/>
<path d="M518.200 558.600q0-1 1-1h3.600l1.200 1.400h5.600q1 0 1 1v7.600q0 1-1 1h-10.400q-1 0-1-1z" fill="#f4c842"/><rect x="518.200" y="559.800" width="12.400" height="8.800" rx="1" fill="#fad65e"/><rect x="520.600" y="565.200" width="7.600" height="3.400" fill="#1e7ad0"/><rect x="518.200" y="557.600" width="4.400" height="1.200" fill="#e8a030"/>
<circle cx="547.500" cy="563.200" r="6.400" fill="url(#edge)"/><path d="M541.600 561.500q2-5 7-4.600q4.600.6 5.200 5q.2 2.600-2.600 3q-2.600-.2-2-2.200q-1.200-2.600-4-2.200q-2.400.4-3.600 1z" fill="#3cc88c"/><path d="M548.600 563q-.6 2.600 2.600 3.200q1.800 0 2.600-1q-1.600 3.800-5.400 4.200q-3-1-3.400-4q.2-2.600 3.600-2.400z" fill="#1f1f1f"/>
<path d="M567.800 560v-1.400q0-1.800 1.800-1.800h2.800q1.800 0 1.800 1.800v1.400" fill="none" stroke="#e8e8e8" stroke-width=".9"/><rect x="565" y="560" width="11.900" height="9.500" rx="1" fill="#f2f2f2"/><rect x="568.600" y="562.400" width="2.200" height="2.200" fill="#f25022"/><rect x="571.300" y="562.400" width="2.200" height="2.200" fill="#7fba00"/><rect x="568.600" y="565.100" width="2.200" height="2.200" fill="#00a4ef"/><rect x="571.300" y="565.100" width="2.200" height="2.200" fill="#ffb900"/>
<path d="M588.500 557h8l2.900 2.600v9.900h-10.900z" fill="#e0e4e0"/><rect x="589.200" y="565.400" width="9.500" height="3.400" fill="#4cae3c"/><path d="M589.500 565.400l2-4 2 2.600 2-3.400 2.800 4.800z" fill="#8a9a8a"/><path d="M592 565l6.600-7.600" stroke="#f4b400" stroke-width="1.100"/>
<rect x="607.300" y="552.400" width="21.500" height="21.200" rx="2.400" fill="#2e2e2e"/><rect x="611.900" y="557.400" width="12.100" height="11.900" fill="#0a0a0a"/><rect x="612.500" y="571.700" width="10" height="1.100" rx=".5" fill="#d8c8ec"/>
<path d="M623 558.400L621 561.200L621.500 562.400L619.400 566" fill="none" stroke="#e02a1c" stroke-width="1.500" stroke-linejoin="round"/>
<rect x="523.100" y="572.100" width="2.500" height=".8" rx=".4" fill="#9a9a9a"/><rect x="593.500" y="572.100" width="2.500" height=".8" rx=".4" fill="#9a9a9a"/>
<path d="M920.600 564.900L923.800 561.500L927 564.900" fill="none" stroke="#f0f0f0" stroke-width=".8"/>
<rect x="957.900" y="559.700" width="6.800" height="5.600" fill="none" stroke="#f0f0f0" stroke-width=".9"/><path d="M959.300 567.400h4M961.300 565.200v2.200" stroke="#f0f0f0" stroke-width=".9"/><circle cx="965" cy="560" r="1.500" fill="#1f1f1f" stroke="#f0f0f0" stroke-width=".6"/>
<path d="M970.600 562.300h1.600l2.400-2.200v6.800l-2.400-2.200h-1.600z" fill="none" stroke="#f0f0f0" stroke-width=".9" stroke-linejoin="round"/><path d="M976 561.600q1.200 1.900 0 3.800M977.600 560.200q2.100 3.300 0 6.600" fill="none" stroke="#f0f0f0" stroke-width=".8"/>
<text x="616.400" y="565.400" text-anchor="middle" font-family="Liberation Sans, sans-serif" font-weight="bold" font-size="8.600" fill="#f4f4f4" stroke="#f4f4f4" stroke-width=".3">Q</text><path d="M618.500 567.200h4.500" stroke="#9a9a9a" stroke-width=".8"/>
</svg>
<div class="tb" style="left:935.800px;top:559.60px;font-size:5.900px">ENG</div>
<div class="tb" style="right:8.200px;top:555.30px;font-size:6.100px">10:23 PM</div>
<div class="tb" style="right:8.200px;top:563.71px;font-size:6.300px">9/18/2025</div>

</div></div></body></html>
